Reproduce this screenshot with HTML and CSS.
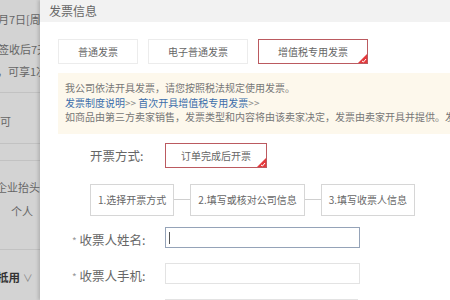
FILE: index.html
```html
<!DOCTYPE html>
<html lang="zh-CN">
<head>
    <meta charset="UTF-8">
    <title>发票信息</title>
    <link rel="stylesheet" href="styles.css">
</head>
<body>
    <!-- pagina por baixo do modal -->
    <div class="side">
        <div class="side-group g1">
            <div class="s-line l1">月7日[周六]</div>
            <div class="s-line l2">签收后7天</div>
            <div class="s-line l3">，可享1次</div>
        </div>
        <div class="side-group g2">
            <div class="s-line">可</div>
        </div>
        <div class="side-group g3"></div>
        <div class="side-group g4">
            <div class="s-line l4">企业抬头发票</div>
            <div class="s-line l5">个人</div>
        </div>
        <div class="side-group g5">
            <div class="s-line l6">抵用 <span class="chev">∨</span></div>
        </div>
    </div>

    <div class="modal">
        <div class="modal-title">发票信息</div>
        <div class="modal-body">
            <div class="tabs">
                <div class="tab">普通发票</div>
                <div class="tab">电子普通发票</div>
                <div class="tab selected">增值税专用发票
                    <svg class="corner" width="9" height="9" viewBox="0 0 9 9"><polygon points="9,0 9,9 0,9" fill="#e4393c"/><polyline points="4,7 5.5,8 8,5" fill="none" stroke="#fff" stroke-width="1"/></svg>
                </div>
            </div>

            <div class="notice">
                <div>我公司依法开具发票，请您按照税法规定使用发票。</div>
                <div><a href="#">发票制度说明</a><span class="gt">&gt;&gt;</span> <a href="#">首次开具增值税专用发票</a><span class="gt">&gt;&gt;</span></div>
                <div>如商品由第三方卖家销售，发票类型和内容将由该卖家决定，发票由卖家开具并提供。发票内容</div>
            </div>

            <div class="mode-row">
                <div class="mode-label">开票方式:</div>
                <div class="tab selected mode-box">订单完成后开票
                    <svg class="corner" width="9" height="9" viewBox="0 0 9 9"><polygon points="9,0 9,9 0,9" fill="#e4393c"/><polyline points="4,7 5.5,8 8,5" fill="none" stroke="#fff" stroke-width="1"/></svg>
                </div>
            </div>

            <div class="steps">
                <div class="step">1.选择开票方式</div>
                <div class="step-line"></div>
                <div class="step">2.填写或核对公司信息</div>
                <div class="step-line"></div>
                <div class="step">3.填写收票人信息</div>
            </div>

            <div class="form-row">
                <div class="f-label"><span class="req">*</span> 收票人姓名:</div>
                <div class="f-input focus"><span class="caret"></span></div>
            </div>
            <div class="form-row">
                <div class="f-label"><span class="req">*</span> 收票人手机:</div>
                <div class="f-input"></div>
            </div>
            <div class="form-row">
                <div class="f-label"><span class="req">*</span> 收票人地区:</div>
                <div class="f-select s1"></div>
                <div class="f-select s2"></div>
                <div class="f-select s2"></div>
            </div>
        </div>
    </div>
</body>
</html>
```

FILE: styles.css
```css
/* Estilos gerais */
body {
    margin: 0;
    width: 450px;
    height: 300px;
    overflow: hidden;
    display: flex;
    font-family: "Noto Sans CJK SC", "Noto Sans", sans-serif;
    background: #d2d2d2;
}

/* faixa da pagina escurecida */
.side {
    width: 40px;
    flex-shrink: 0;
    overflow: hidden;
    background: #d3d3d3;
    font-size: 11px;
    color: #666;
}

.side-group {
    border-bottom: 1px solid #c2c2c2;
    box-sizing: border-box;
}

.g1 { height: 93px; }
.g2 { height: 51px; padding-top: 21px; }
.g3 { height: 17px; }
.g4 { height: 70px; }
.g5 { height: 53px; }

.s-line {
    white-space: nowrap;
    line-height: 14px;
    height: 14px;
}

.l1 { padding-top: 12px; margin-left: -2px; }
.l2 { margin-top: 16px; margin-left: -2px; }
.l3 { margin-top: 8px; margin-left: -3px; }
.l4 { margin-top: 19px; margin-left: -4px; }
.l5 { margin-top: 10px; text-align: right; padding-right: 7px; }
.l6 {
    margin-top: 20px;
    margin-left: -3px;
    font-weight: bold;
    font-size: 11.5px;
    color: #333;
}

.chev {
    font-weight: normal;
    color: #888;
    font-size: 10px;
}

/* modal */
.modal {
    flex: 1;
    background: #fff;
    overflow: hidden;
    box-shadow: -2px 0 3px rgba(0, 0, 0, 0.15);
    color: #666;
}

.modal-title {
    height: 22px;
    line-height: 21px;
    background: #f2f2f2;
    padding-left: 9px;
    font-size: 12px;
    color: #666;
}

.modal-body {
    padding: 17px 0 0 18px;
}

.tabs {
    display: flex;
    gap: 10px;
}

.tab {
    position: relative;
    height: 23px;
    line-height: 23px;
    padding: 0 19px;
    border: 1px solid #ececec;
    font-size: 10px;
    color: #666;
    white-space: nowrap;
}

.tab.selected {
    border-color: #bb5a60;
}

.corner {
    position: absolute;
    right: 0;
    bottom: 0;
    display: block;
}

.notice {
    margin-top: 9px;
    background: #fdf8ec;
    padding: 8px 0 9px 7px;
    font-size: 10px;
    line-height: 14.5px;
    color: #777;
    white-space: nowrap;
}

.notice a {
    color: #3c6eab;
    text-decoration: none;
}

.gt {
    color: #888;
}

.mode-row {
    display: flex;
    align-items: center;
    margin-top: 9px;
    padding-left: 32px;
}

.mode-label {
    width: 75px;
    font-size: 12.5px;
    color: #666;
}

.mode-box {
    padding: 0 15px;
}

.steps {
    display: flex;
    align-items: center;
    margin-top: 16px;
    padding-left: 32px;
}

.step {
    height: 30px;
    line-height: 30px;
    padding: 0 7px;
    border: 1px solid #d6d6d6;
    font-size: 10px;
    color: #666;
    white-space: nowrap;
}

.step-line {
    width: 16px;
    height: 1px;
    background: #cfcfcf;
}

.form-row {
    display: flex;
    align-items: center;
    margin-top: 11px;
    padding-left: 14px;
}

.form-row + .form-row {
    margin-top: 14px;
}

.f-label {
    width: 93px;
    font-size: 12.5px;
    color: #666;
    padding-top: 3px;
    white-space: nowrap;
}

.req {
    color: #999;
    font-size: 10px;
}

.f-input {
    width: 193px;
    height: 19px;
    border: 1px solid #e3e3e3;
    position: relative;
}

.f-input.focus {
    border-color: #95a3b8;
}

.caret {
    position: absolute;
    left: 3px;
    top: 4px;
    width: 1px;
    height: 12px;
    background: #555;
}

.f-select {
    height: 19px;
    border: 1px solid #e3e3e3;
    margin-right: -1px;
}

.s1 { width: 71px; }
.s2 { width: 59px; }
```
